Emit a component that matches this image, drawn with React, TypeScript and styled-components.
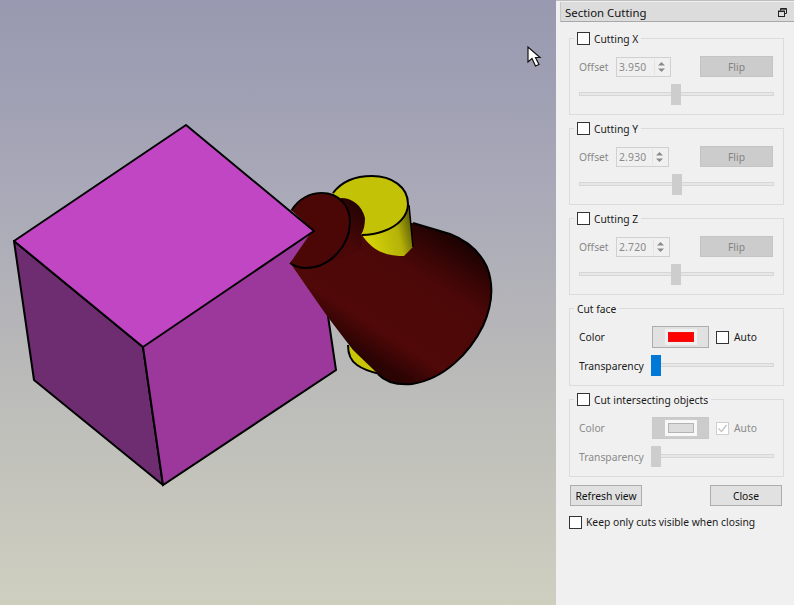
import React from "react";
import styled, { createGlobalStyle } from "styled-components";

const Global = createGlobalStyle`
  html, body { margin: 0; padding: 0; width: 794px; height: 605px; overflow: hidden; }
  body { font-family: "Noto Sans", "Open Sans", sans-serif; font-size: 10.3px; color: #1a1a1a; background: #f0f0f0; }
`;

const Window = styled.div`
  display: flex;
  width: 794px;
  height: 605px;
`;
const Viewport = styled.div`
  width: 556px;
  height: 605px;
  flex: none;
  background: linear-gradient(180deg, #9898b0 0%, #a8a8b8 30%, #b9b9b9 60%, #cfcfc0 100%);
`;
const SceneSvg = styled.svg`
  display: block;
`;
const Panel = styled.aside`
  width: 238px;
  flex: none;
  box-sizing: border-box;
  border-top: 1px solid #bdbdbd;
  background: #f0f0f0;
  padding-top: 1px;
`;
const TitleBar = styled.header`
  box-sizing: border-box;
  height: 20px;
  margin-left: 4px;
  padding: 1px 7px 0 4px;
  background: #dcdcdc;
  border-left: 1px solid #c8c8c8;
  border-bottom: 1px solid #a8a8a8;
  display: flex;
  align-items: center;
  justify-content: space-between;
  font-size: 11.4px;
  color: #111;
`;
const Body = styled.div`
  display: flex;
  flex-direction: column;
  padding: 9px 10px 0 13px;
`;
const Group = styled.fieldset<{ $height: number }>`
  box-sizing: border-box;
  margin: 0 0 6px;
  padding: 11px 9px 0 9px;
  min-width: 0;
  height: ${(p) => p.$height}px;
  border: 1px solid #dcdcdc;
  display: flex;
  flex-direction: column;
  gap: 7px;
`;
const Legend = styled.legend`
  display: flex;
  align-items: center;
  gap: 4px;
  height: 14px;
  line-height: 14px;
  margin-left: -5px;
  padding: 0 3px;
  color: #1a1a1a;
`;
const LegendText = styled.span`
  margin-top: 2px;
`;
const Check = styled.span<{ $dim?: boolean }>`
  box-sizing: border-box;
  width: 13px;
  height: 13px;
  flex: none;
  background: #fff;
  border: 1px solid ${(p) => (p.$dim ? "#cfcfcf" : "#333")};
  display: inline-flex;
  align-items: center;
  justify-content: center;
`;
const Row = styled.div<{ $tall?: boolean }>`
  display: flex;
  align-items: center;
  height: ${(p) => (p.$tall ? 22 : 21)}px;
`;
const Label = styled.span<{ $dim?: boolean; $w?: number }>`
  color: ${(p) => (p.$dim ? "#8a8a8a" : "#1a1a1a")};
  width: ${(p) => p.$w ?? 37}px;
  flex: none;
`;
const Spin = styled.div<{ $w: number }>`
  box-sizing: border-box;
  width: ${(p) => p.$w}px;
  height: 20px;
  border: 1px solid #d0d0d0;
  display: flex;
  align-items: center;
  justify-content: space-between;
  padding: 0 2px 0 2px;
  color: #8a8a8a;
  letter-spacing: 0.2px;
`;
const SpinArrows = styled.span`
  box-sizing: border-box;
  width: 14px;
  height: 16px;
  border-left: 1px solid #e4e4e4;
  display: flex;
  align-items: center;
  justify-content: center;
`;
const Flip = styled.div<{ $w: number }>`
  box-sizing: border-box;
  margin-left: ${(p) => p.$w}px;
  width: 73px;
  height: 21px;
  background: #cccccc;
  border: 1px solid #c4c4c4;
  color: #838383;
  display: flex;
  align-items: center;
  justify-content: center;
`;
const Slider = styled.div<{ $w?: number }>`
  position: relative;
  height: 21px;
  width: ${(p) => p.$w ?? 195}px;
  flex: none;
  display: flex;
  align-items: center;
`;
const Track = styled.div`
  box-sizing: border-box;
  width: 100%;
  height: 4px;
  margin-top: -1px;
  background: #e7e7e7;
  border: 1px solid #d6d6d6;
`;
const Thumb = styled.div<{ $x: number; $on?: boolean }>`
  position: absolute;
  top: 0;
  left: ${(p) => p.$x}px;
  width: 10px;
  height: 21px;
  background: ${(p) => (p.$on ? "#0078d7" : "#cdcdcd")};
`;
const Swatch = styled.div<{ $dim?: boolean }>`
  box-sizing: border-box;
  width: 57px;
  height: 22px;
  flex: none;
  background: ${(p) => (p.$dim ? "#cccccc" : "#e1e1e1")};
  border: 1px solid ${(p) => (p.$dim ? "#c8c8c8" : "#adadad")};
  display: flex;
  align-items: center;
  justify-content: center;
`;
const SwatchInner = styled.span<{ $dim?: boolean }>`
  box-sizing: border-box;
  width: 32px;
  height: 16px;
  border: 3px solid ${(p) => (p.$dim ? "#f8f8f8" : "#f0f0f0")};
  background: ${(p) => (p.$dim ? "#dcdcdc" : "#ff0000")};
  box-shadow: inset 0 0 0 1px ${(p) => (p.$dim ? "#b4b4b4" : "#ee1010")};
`;
const AutoCheck = styled.div<{ $dim?: boolean }>`
  display: flex;
  align-items: center;
  gap: 5px;
  margin-left: 7px;
  color: ${(p) => (p.$dim ? "#8a8a8a" : "#1a1a1a")};
`;
const Buttons = styled.div`
  display: flex;
  justify-content: space-between;
  margin: 2px 2px 0 1px;
`;
const Button = styled.div<{ $w: number }>`
  box-sizing: border-box;
  width: ${(p) => p.$w}px;
  height: 21px;
  background: #e1e1e1;
  border: 1px solid #adadad;
  display: flex;
  align-items: center;
  justify-content: center;
  color: #111;
`;
const KeepRow = styled.div`
  display: flex;
  align-items: center;
  gap: 4px;
  margin: 9px 0 0 0;
`;

function Undock() {
  return (
    <svg width="9" height="9" viewBox="0 0 9 9" fill="none" stroke="#222">
      <path d="M2.5 2.500V.5h6v5H6.500" />
      <rect x=".5" y="3" width="6" height="5.500" />
      <path d="M.5 3.500h6M2.500 1.200h6" />
    </svg>
  );
}

function Arrows() {
  return (
    <SpinArrows>
      <svg width="9" height="12" viewBox="0 0 9 12">
        <path d="M4.500 1 8 4.500H1z" fill="#8a8a8a" />
        <path d="M1 7.500h7L4.500 11z" fill="#8a8a8a" />
      </svg>
    </SpinArrows>
  );
}

function CutGroup({ axis, value, thumb, spinW }: { axis: string; value: string; thumb: number; spinW: number }) {
  return (
    <Group $height={84}>
      <Legend>
        <Check />
        <LegendText>Cutting {axis}</LegendText>
      </Legend>
      <Row>
        <Label $dim>Offset</Label>
        <Spin $w={spinW}>
          {value}
          <Arrows />
        </Spin>
        <Flip $w={84 - spinW}>Flip</Flip>
      </Row>
      <Slider>
        <Track />
        <Thumb $x={thumb} />
      </Slider>
    </Group>
  );
}

const conePath =
  "M290 263L327 316L353 350L378 374C386 383 398 385 412 384C445 379 470 352 483 326C492 306 494 285 487 267C480 252 468 241 450 234L413 223L365 225L330 205Z";

function Scene() {
  return (
    <SceneSvg width="556" height="605" viewBox="0 0 556 605">
      <defs>
        <linearGradient id="cone" gradientUnits="userSpaceOnUse" x1="440" y1="225" x2="358" y2="352">
          <stop offset="0" stopColor="#1a0202" />
          <stop offset="0.2" stopColor="#3a0505" />
          <stop offset="0.35" stopColor="#4c0808" />
          <stop offset="0.8" stopColor="#500808" />
          <stop offset="1" stopColor="#2a0303" />
        </linearGradient>
        <linearGradient id="cyl" gradientUnits="userSpaceOnUse" x1="413" y1="225" x2="368" y2="236">
          <stop offset="0" stopColor="#5c5a08" />
          <stop offset="0.35" stopColor="#b4b208" />
          <stop offset="1" stopColor="#d4d206" />
        </linearGradient>
        <linearGradient id="neck" gradientUnits="userSpaceOnUse" x1="368" y1="205" x2="340" y2="235">
          <stop offset="0" stopColor="#1e0303" />
          <stop offset="1" stopColor="#4a0707" />
        </linearGradient>
      </defs>
      <path d="M14 241 143 347 163 485 34 380Z" fill="#6e2c71" stroke="#000" strokeWidth="2" strokeLinejoin="round" />
      <path d="M143 347 314 231 290 263 328 316 336 370 163 485Z" fill="#9c389c" />
      <path d="M143 347 163 485 336 370 328 316" fill="none" stroke="#000" strokeWidth="2" />
      <path d="M348 345C348 354 351 361 357 365C364 370 371 372 380 374L353 349Z" fill="#c8c606" />
      <path d="M348 345C348 354 351 361 357 365C364 370 371 372 380 374" fill="none" stroke="#000" strokeWidth="2" />
      <path d={conePath} fill="url(#cone)" />
      <path
        d="M378 374C386 383 398 385 412 384C445 379 470 352 483 326C492 306 494 285 487 267C480 252 468 241 450 234L413 223"
        fill="none"
        stroke="#000"
        strokeWidth="2"
      />
      <path d="M362 235C372 250 384 256 404 256L413 247L409 205L370 220Z" fill="url(#cyl)" />
      <path d="M409 205L413 247" stroke="#000" strokeWidth="1.500" />
      <path
        d="M333 193C342 181 355 176 372 176C392 176 408 187 408 204C408 216 398 226 384 231C376 234 368 235 362 235L333 205Z"
        fill="#c4c206"
      />
      <path
        d="M333 193C342 181 355 176 372 176C392 176 408 187 408 204C408 216 398 226 384 231C376 234 368 235 362 235"
        fill="none"
        stroke="#000"
        strokeWidth="2"
      />
      <path d="M341 198C352 198 362 205 365 218C365 224 364 230 361 235L362 250L330 262L316 225Z" fill="url(#neck)" />
      <path
        d="M291.500 210.500C299 198 311 193 322 193C338 193 350 205 350 222C350 245 330 268 306 268C300 268 294 266 290 263L315 232Z"
        fill="#4b0606"
      />
      <path
        d="M291.500 210.500C299 198 311 193 322 193C338 193 350 205 350 222C350 245 330 268 306 268C300 268 294 266 290 263"
        fill="none"
        stroke="#000"
        strokeWidth="2"
      />
      <path d="M186 125 14 241 143 347 314 231Z" fill="#c146c4" stroke="#000" strokeWidth="2" strokeLinejoin="round" />
      <path d="M528 47V62L532 58.500L535.500 66L539 64.500L535.500 57.500H540Z" fill="#fff" stroke="#111" strokeWidth="1.200" />
    </SceneSvg>
  );
}

export default function App() {
  return (
    <Window>
      <Global />
      <Viewport>
        <Scene />
      </Viewport>
      <Panel>
        <TitleBar>
          Section Cutting
          <Undock />
        </TitleBar>
        <Body>
          <CutGroup axis="X" value="3.950" thumb={92} spinW={55} />
          <CutGroup axis="Y" value="2.930" thumb={93} spinW={53} />
          <CutGroup axis="Z" value="2.720" thumb={92} spinW={54} />
          <Group $height={85}>
            <Legend>
              <LegendText>Cut face</LegendText>
            </Legend>
            <Row $tall>
              <Label $w={73}>Color</Label>
              <Swatch>
                <SwatchInner />
              </Swatch>
              <AutoCheck>
                <Check />
                Auto
              </AutoCheck>
            </Row>
            <Row>
              <Label $w={72}>Transparency</Label>
              <Slider $w={123}>
                <Track />
                <Thumb $x={0} $on />
              </Slider>
            </Row>
          </Group>
          <Group $height={85}>
            <Legend>
              <Check />
              <LegendText>Cut intersecting objects</LegendText>
            </Legend>
            <Row $tall>
              <Label $dim $w={73}>Color</Label>
              <Swatch $dim>
                <SwatchInner $dim />
              </Swatch>
              <AutoCheck $dim>
                <Check $dim>
                  <svg width="11" height="11" viewBox="0 0 11 11" fill="none" stroke="#c4c4c4" strokeWidth="1.400">
                    <path d="M1.500 5.500 4.500 8.500 9.500 2" />
                  </svg>
                </Check>
                Auto
              </AutoCheck>
            </Row>
            <Row>
              <Label $dim $w={72}>Transparency</Label>
              <Slider $w={123}>
                <Track />
                <Thumb $x={0} />
              </Slider>
            </Row>
          </Group>
          <Buttons>
            <Button $w={72}>Refresh view</Button>
            <Button $w={72}>Close</Button>
          </Buttons>
          <KeepRow>
            <Check />
            Keep only cuts visible when closing
          </KeepRow>
        </Body>
      </Panel>
    </Window>
  );
}
